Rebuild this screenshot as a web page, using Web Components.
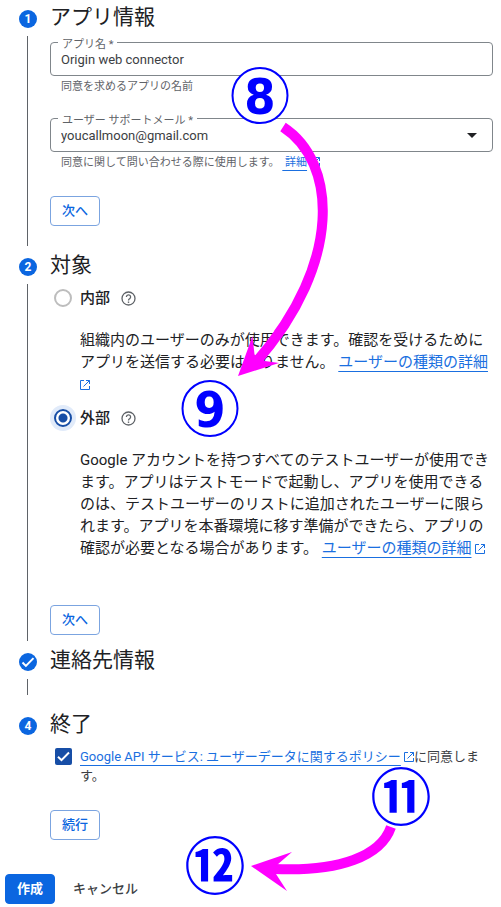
<!DOCTYPE html>
<html lang="ja">
<head>
<meta charset="utf-8">
<meta name="viewport" content="width=device-width, initial-scale=1">
<title>アプリ情報</title>
<style>
  body {
    margin: 0;
    background: #fff;
    color: #202124;
    font-family: Roboto, "Noto Sans CJK JP", sans-serif;
  }
</style>
</head>
<body>
<setup-page>
  <setup-step mark="1" heading="アプリ情報">
    <text-field label="アプリ名 *" value="Origin web connector">同意を求めるアプリの名前</text-field>
    <select-field label="ユーザー サポートメール *" value="youcallmoon@gmail.com">同意に関して問い合わせる際に使用します。<ext-link>&nbsp;詳細</ext-link></select-field>
    <app-button slot="action">次へ</app-button>
  </setup-step>
  <setup-step mark="2" heading="対象" class="audience">
    <radio-option label="内部">組織内のユーザーのみが使用できます。確認を受けるためにアプリを送信する必要はありません。 <ext-link>ユーザーの種類の詳細</ext-link></radio-option>
    <radio-option label="外部" checked>Google アカウントを持つすべてのテストユーザーが使用できます。アプリはテストモードで起動し、アプリを使用できるのは、テストユーザーのリストに追加されたユーザーに限られます。アプリを本番環境に移す準備ができたら、アプリの確認が必要となる場合があります。 <ext-link>ユーザーの種類の詳細</ext-link></radio-option>
    <app-button slot="action">次へ</app-button>
  </setup-step>
  <setup-step mark="check" heading="連絡先情報"></setup-step>
  <setup-step mark="4" heading="終了" last>
    <check-option><ext-link>Google API サービス: ユーザーデータに関するポリシー</ext-link>に同意します。</check-option>
    <app-button slot="action">続行</app-button>
  </setup-step>
  <app-button slot="footer" variant="primary">作成</app-button>
  <app-button slot="footer" variant="text">キャンセル</app-button>
  <guide-marks slot="guide"></guide-marks>
</setup-page>

<script>
class SetupPage extends HTMLElement {
  constructor() {
    super();
    this.attachShadow({ mode: 'open' }).innerHTML = `
      <style>
        :host {
          display: block;
          position: relative;
          padding: 1px 8px 3px 5px;
        }
        main {
          display: flex;
          flex-direction: column;
          gap: 3px;
          padding-left: 14px;
        }
        footer {
          display: flex;
          gap: 6px;
          margin-top: 34px;
        }
      </style>
      <main><slot></slot></main>
      <footer><slot name="footer"></slot></footer>
      <slot name="guide"></slot>
    `;
  }
}

class SetupStep extends HTMLElement {
  connectedCallback() {
    const mark = this.getAttribute('mark');
    const last = this.hasAttribute('last');
    const empty = !this.children.length;
    const icon = mark === 'check'
      ? '<svg width="18" height="18" viewBox="0 0 18 18"><path d="M3.5 9.5l3.4 3.4 7.6-7.8" fill="none" stroke="#fff" stroke-width="2"/></svg>'
      : mark;
    this.attachShadow({ mode: 'open' }).innerHTML = `
      <style>
        :host {
          display: grid;
          grid-template-columns: 18px minmax(0, 1fr);
          column-gap: 13px;
        }
        .mark {
          display: flex;
          align-items: center;
          justify-content: center;
          width: 18px;
          height: 18px;
          margin-top: 9px;
          border-radius: 50%;
          background: #0b66e0;
          color: #fff;
          font-size: 12px;
          font-weight: 700;
          line-height: 18px;
        }
        h2 {
          margin: 0;
          font-size: 21px;
          font-weight: 400;
          line-height: 32px;
          height: 35px;
        }
        .rail {
          width: 1px;
          margin-left: 8px;
          background: ${last ? 'none' : '#5f6368'};
        }
        .body {
          display: flex;
          flex-direction: column;
          gap: 21px;
          min-height: 16px;
          padding: ${empty ? '0' : last ? '4px 0 0' : '6px 0 20px'};
        }
        :host(.audience) .body {
          gap: 12px;
          padding: 3px 0 6px;
        }
        .action {
          margin-top: ${last ? '4px' : '2px'};
        }
        :host(.audience) .action {
          margin-top: 34px;
        }
        :host([mark="check"]) {
          margin-bottom: 10px;
        }
      </style>
      <span class="mark">${icon}</span>
      <h2>${this.getAttribute('heading')}</h2>
      <span class="rail"></span>
      <div class="body">
        <slot></slot>
        ${empty ? '' : '<div class="action"><slot name="action"></slot></div>'}
      </div>
    `;
  }
}

const fieldStyle = `
  :host {
    display: block;
  }
  .box {
    position: relative;
    border: 1px solid #80868b;
    border-radius: 4px;
  }
  label {
    position: absolute;
    top: -6px;
    left: 7px;
    padding: 0 4px;
    background: #fff;
    color: #5f6368;
    font-size: 11px;
    line-height: 16px;
  }
  input, select {
    display: block;
    box-sizing: border-box;
    width: 100%;
    height: 32px;
    margin: 0;
    padding: 0 10px;
    border: 0;
    outline: none;
    background: none;
    color: #3c4043;
    font-family: inherit;
    font-size: 13px;
    appearance: none;
  }
  .arrow {
    position: absolute;
    top: 14px;
    right: 15px;
    pointer-events: none;
  }
  .hint {
    margin-top: 1px;
    padding-left: 11px;
    color: #5f6368;
    font-size: 11px;
    line-height: 20px;
  }
`;

class TextField extends HTMLElement {
  connectedCallback() {
    this.attachShadow({ mode: 'open' }).innerHTML = `
      <style>${fieldStyle}</style>
      <div class="box">
        <label for="field">${this.getAttribute('label')}</label>
        <input id="field" type="text" value="${this.getAttribute('value')}">
      </div>
      <div class="hint"><slot></slot></div>
    `;
  }
}

class SelectField extends HTMLElement {
  connectedCallback() {
    this.attachShadow({ mode: 'open' }).innerHTML = `
      <style>${fieldStyle}</style>
      <div class="box">
        <label for="field">${this.getAttribute('label')}</label>
        <select id="field"><option>${this.getAttribute('value')}</option></select>
        <svg class="arrow" width="10" height="5" viewBox="0 0 10 5"><path d="M0 0h10L5 5z" fill="#202124"/></svg>
      </div>
      <div class="hint"><slot></slot></div>
    `;
  }
}

class ExtLink extends HTMLElement {
  constructor() {
    super();
    this.attachShadow({ mode: 'open' }).innerHTML = `
      <style>
        :host {
          display: inline;
        }
        a {
          color: #1a6fe0;
          text-decoration: underline 1px;
          text-underline-offset: 4px;
        }
        svg {
          width: 10px;
          height: 10px;
          vertical-align: -1px;
        }
      </style><a href="#"><slot></slot></a> <svg viewBox="0 0 10 10" fill="none" stroke="#1a6fe0"><path d="M4 .5H.5v9h9V6M6 .5h3.500V4M9.500.5L3.500 6.500"/></svg>`;
  }
}

class RadioOption extends HTMLElement {
  connectedCallback() {
    this.attachShadow({ mode: 'open' }).innerHTML = `
      <style>
        :host {
          display: block;
        }
        .row {
          display: flex;
          align-items: center;
          height: 22px;
          padding-left: 4px;
        }
        input {
          appearance: none;
          box-sizing: border-box;
          width: 18px;
          height: 18px;
          margin: 0 8px 0 0;
          border: 2px solid #bdbdbd;
          border-radius: 50%;
        }
        input:checked {
          border-color: #174ea6;
          background: radial-gradient(circle, #174ea6 4px, #fff 5px);
          box-shadow: 0 0 0 4px #e1ebfa;
        }
        label {
          font-size: 15px;
          font-weight: 500;
          line-height: 22px;
        }
        svg {
          margin-left: 11px;
        }
        p {
          margin: 20px 0 0;
          padding-left: 30px;
          font-size: 15px;
          line-height: 22px;
        }
      </style>
      <div class="row">
        <input id="option" type="radio" ${this.hasAttribute('checked') ? 'checked' : ''}>
        <label for="option">${this.getAttribute('label')}</label>
        <svg width="15" height="15" viewBox="0 0 15 15" fill="none" stroke="#5f6368">
          <circle cx="7.500" cy="7.500" r="6.500" stroke-width="1.300"/>
          <path d="M5.400 6a2.100 2.100 0 1 1 3.500 1.500c-.8.7-1.400 1-1.400 2" stroke-width="1.300"/>
          <path d="M7.500 10.500v1.400" stroke-width="1.400"/>
        </svg>
      </div>
      <p><slot></slot></p>
    `;
    // radios sit in separate roots, so the group is kept by hand
    this.shadowRoot.querySelector('input').addEventListener('change', () => {
      this.parentElement.querySelectorAll('radio-option').forEach((el) => {
        if (el !== this) el.shadowRoot.querySelector('input').checked = false;
      });
    });
  }
}

class CheckOption extends HTMLElement {
  constructor() {
    super();
    this.attachShadow({ mode: 'open' }).innerHTML = `
      <style>
        :host {
          display: flex;
          align-items: flex-start;
          gap: 8px;
          padding-left: 5px;
        }
        .tick {
          display: grid;
          flex: none;
          margin-top: 1px;
        }
        .tick > * {
          grid-area: 1 / 1;
        }
        input {
          appearance: none;
          width: 17px;
          height: 17px;
          margin: 0;
          border-radius: 2px;
          background: #174ea6;
        }
        svg {
          pointer-events: none;
        }
        label {
          font-size: 13px;
          line-height: 19px;
          color: #3c4043;
        }
      </style>
      <span class="tick">
        <input id="agree" type="checkbox" checked>
        <svg width="17" height="17" viewBox="0 0 17 17"><path d="M3 8.700l3.500 3.500L14 4.500" fill="none" stroke="#fff" stroke-width="2"/></svg>
      </span>
      <label for="agree"><slot></slot></label>
    `;
  }
}

class AppButton extends HTMLElement {
  constructor() {
    super();
    this.attachShadow({ mode: 'open' }).innerHTML = `
      <style>
        :host {
          display: block;
        }
        button {
          display: block;
          height: 30px;
          padding: 0 11px 3px;
          border: 1px solid #7ba4e0;
          border-radius: 4px;
          background: #fff;
          color: #0b66e0;
          font-family: inherit;
          font-size: 13px;
          font-weight: 500;
          cursor: pointer;
        }
        :host([variant="primary"]) button {
          border-color: #0b66e0;
          background: #0b66e0;
          color: #fff;
          font-weight: 700;
        }
        :host([variant="text"]) button {
          border-color: transparent;
          color: #3c4043;
        }
      </style>
      <button type="button"><slot></slot></button>
    `;
  }
}

// numbered marks and arrows that float over the form
class GuideMarks extends HTMLElement {
  constructor() {
    super();
    this.attachShadow({ mode: 'open' }).innerHTML = `
      <style>
        :host {
          position: absolute;
          top: 0;
          left: 0;
          pointer-events: none;
        }
        svg {
          display: block;
          overflow: visible;
        }
        circle {
          fill: #fff;
          stroke: #00f;
          stroke-width: 2;
        }
        text {
          fill: #00f;
          font-family: "DejaVu Sans Condensed", "DejaVu Sans", sans-serif;
          font-stretch: condensed;
          font-size: 50px;
          font-weight: 700;
          text-anchor: middle;
        }
        .ringed {
          font-family: "Noto Sans CJK JP", sans-serif;
          font-stretch: normal;
          font-size: 61px;
        }
      </style>
      <svg width="440" height="900" viewBox="0 0 440 900">
        <g fill="none" stroke="#f0f" stroke-width="10">
          <path d="M283 127C337 162 343 262 257 361"/>
          <path d="M391 827C381 856 340 872 274 869"/>
        </g>
        <g fill="#f0f">
          <path d="M238 376L252.500 336L254.500 354.500L265 361L279 363z"/>
          <path d="M251 866L292 852L277 865L276 874L287 891z"/>
        </g>
        <circle cx="260" cy="95.500" r="27.500"/>
        <circle cx="210" cy="408.500" r="27.500"/>
        <text x="260" y="114">8</text>
        <text x="210" y="427">9</text>
        <text x="401" y="820" class="ringed">⑪</text>
        <text x="215" y="889" class="ringed">⑫</text>
      </svg>
    `;
  }
}

customElements.define('setup-page', SetupPage);
customElements.define('setup-step', SetupStep);
customElements.define('text-field', TextField);
customElements.define('select-field', SelectField);
customElements.define('ext-link', ExtLink);
customElements.define('radio-option', RadioOption);
customElements.define('check-option', CheckOption);
customElements.define('app-button', AppButton);
customElements.define('guide-marks', GuideMarks);
</script>
</body>
</html>
